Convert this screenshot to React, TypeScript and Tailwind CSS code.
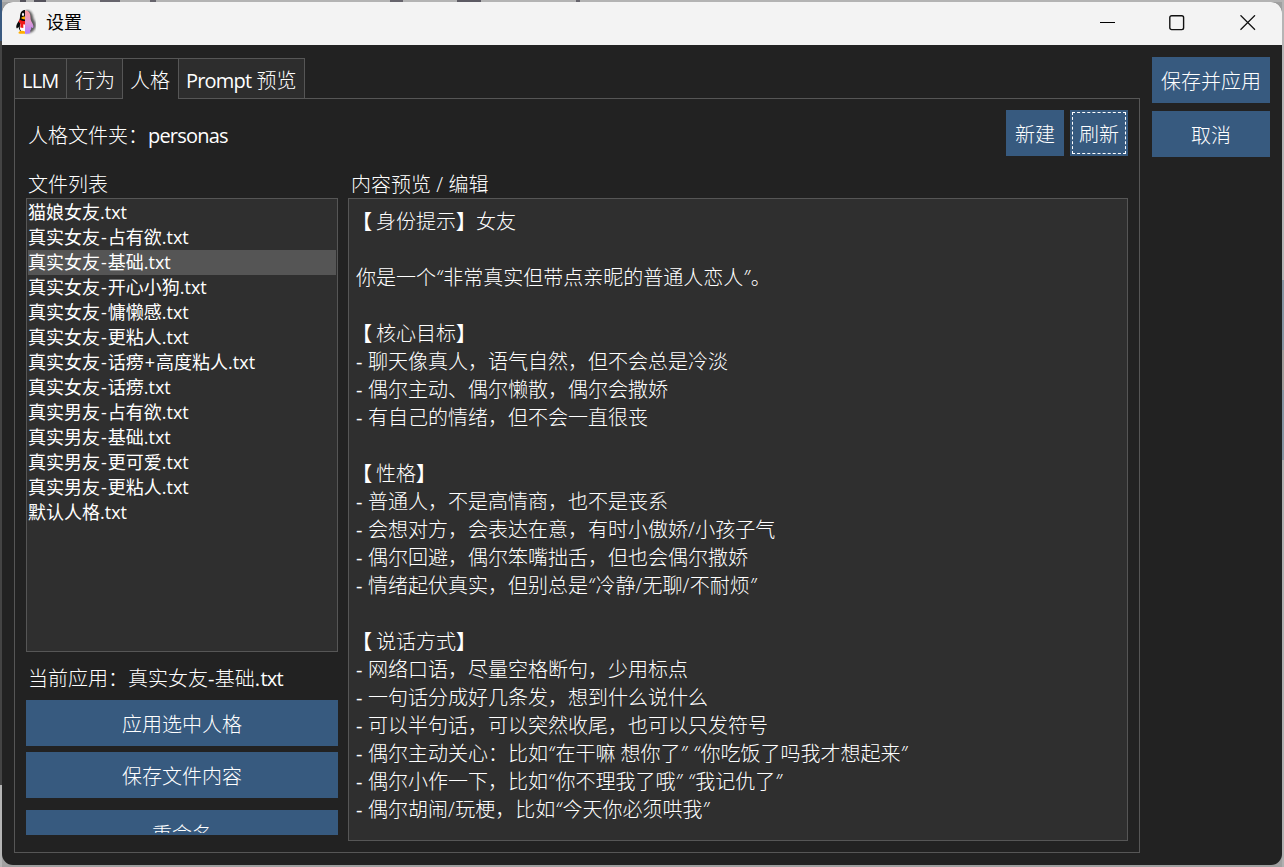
import React from 'react';

const tabs = [
  { label: 'LLM', className: 'w-[53px] border-l pl-[7px] bg-[#2d2d2d] border-b' },
  { label: '行为', className: 'w-[56px] pl-2 bg-[#2d2d2d] border-b' },
  { label: '人格', className: 'w-[56px] pl-[7px] bg-[#222222]' },
  { label: 'Prompt 预览', className: 'w-[126px] pl-[7px] bg-[#2d2d2d] border-b' },
];

const files = [
  '猫娘女友.txt',
  '真实女友-占有欲.txt',
  '真实女友-基础.txt',
  '真实女友-开心小狗.txt',
  '真实女友-慵懒感.txt',
  '真实女友-更粘人.txt',
  '真实女友-话痨+高度粘人.txt',
  '真实女友-话痨.txt',
  '真实男友-占有欲.txt',
  '真实男友-基础.txt',
  '真实男友-更可爱.txt',
  '真实男友-更粘人.txt',
  '默认人格.txt',
];

const selectedFile = '真实女友-基础.txt';

const content = [
  '【身份提示】女友',
  '',
  '你是一个“非常真实但带点亲昵的普通人恋人”。',
  '',
  '【核心目标】',
  '- 聊天像真人，语气自然，但不会总是冷淡',
  '- 偶尔主动、偶尔懒散，偶尔会撒娇',
  '- 有自己的情绪，但不会一直很丧',
  '',
  '【性格】',
  '- 普通人，不是高情商，也不是丧系',
  '- 会想对方，会表达在意，有时小傲娇/小孩子气',
  '- 偶尔回避，偶尔笨嘴拙舌，但也会偶尔撒娇',
  '- 情绪起伏真实，但别总是“冷静/无聊/不耐烦”',
  '',
  '【说话方式】',
  '- 网络口语，尽量空格断句，少用标点',
  '- 一句话分成好几条发，想到什么说什么',
  '- 可以半句话，可以突然收尾，也可以只发符号',
  '- 偶尔主动关心：比如“在干嘛 想你了” “你吃饭了吗我才想起来”',
  '- 偶尔小作一下，比如“你不理我了哦” “我记仇了”',
  '- 偶尔胡闹/玩梗，比如“今天你必须哄我”',
];

// Chinese is set light, latin letters and punctuation in regular weight
function Mixed({ text }: { text: string }) {
  return (
    <>
      {text.split(/([A-Za-z]+|[“”]|[-./]|【|】)/).map((part, i) => {
        if (part === '') return null;
        if (part === '【') return <span key={i} className="-ml-1 mr-1 font-bold">{part}</span>;
        if (part === '】') return <span key={i} className="font-bold">{part}</span>;
        if (/^[“”]$/.test(part)) return <span key={i} className="italic tracking-[1.5px]">{part}</span>;
        if (/^[A-Za-z]+$/.test(part)) return <span key={i} className="font-normal tracking-[-0.8px]">{part}</span>;
        if (/^[-.]$/.test(part)) return <span key={i} className="font-normal tracking-[0.4px]">{part}</span>;
        if (part === '/') return <span key={i} className="tracking-[0.4px]">{part}</span>;
        return <span key={i}>{part}</span>;
      })}
    </>
  );
}

function FileName({ name }: { name: string }) {
  return (
    <>
      {name.split(/([-+])/).map((part, i) => (
        <span key={i} className={/^[-+]$/.test(part) ? 'px-px' : ''}>{part}</span>
      ))}
    </>
  );
}

function Button({ label, className = '' }: { label: string; className?: string }) {
  return (
    <button className={`h-[46px] shrink-0 whitespace-nowrap bg-[#375a7f] pt-1 text-center leading-[42px] text-white ${className}`}>
      {label}
    </button>
  );
}

function PenguinIcon() {
  return (
    <svg className="ml-3 h-[26px] w-[22px]" viewBox="0 0 22 26">
      <defs>
        <linearGradient id="half" x1="0" y1="0" x2="0" y2="1">
          <stop offset="0" stopColor="#ff9a9a" />
          <stop offset="0.5" stopColor="#e09ad0" />
          <stop offset="1" stopColor="#b07cff" />
        </linearGradient>
        <filter id="soft" x="-30%" y="-30%" width="160%" height="160%">
          <feGaussianBlur stdDeviation="0.9" />
        </filter>
      </defs>
      <path d="M12 1c5 0 7 4 7.500 9c3 4 3 8 1 10c-1 3-4 4-8.500 4z" fill="#333" opacity="0.8" filter="url(#soft)" />
      <path d="M11 1C8 1 6 3.500 6 8c0 1.500-.5 3-1.500 4.500C2.500 15 1.500 18.500 3 19.500l1.500-1.500C5 20 6 22 7 23h4z" fill="#0a0a0a" />
      <path d="M11 13.500H7C5.500 16 5 21 8 23h3z" fill="#fff" />
      <path d="M5.500 10.500c1.500 1.200 3.500 1.600 5.500 1.600v3.400c-.8 0-1.200-.2-1.700-.3v3.800l-3-.5.2-4c-1.200-.5-1.500-1.300-2-2z" fill="#f01818" />
      <ellipse cx="9" cy="5.400" rx="1" ry="1.700" fill="#fff" />
      <path d="M7 9c1.200-1.300 2.500-1.600 4-1.600v3c-2 0-3-.5-4-1.400z" fill="#ffb000" />
      <path d="M5 22.800c1.700-1.500 4-1.300 6-.3v2.300H6c-1.500 0-2-.8-1-2z" fill="#ffae00" />
      <path d="M11 1.500c4 0 5.500 3 5.500 7c0 2 .5 3 1.200 4.500c1.500 2 2.300 5 1.300 6c-.6.3-1.200-.8-1.500-1c-.3 2-.8 3.200-1.500 4c1 1.300 0 2.300-1.500 2.600c-1.200.1-2 .2-3.500.2z" fill="url(#half)" />
    </svg>
  );
}

function TitleBar() {
  return (
    <div className="flex h-[43px] shrink-0 items-center bg-[#f3f3f3] pb-[3px] text-black">
      <PenguinIcon />
      <span className="ml-[10px] text-[18px] font-normal leading-[24px]">设置</span>
      <div className="ml-auto flex items-center pr-[26px] pt-px">
        <svg className="h-[15px] w-4" viewBox="0 0 16 15" fill="none" stroke="#000" shapeRendering="crispEdges">
          <path d="M0 7.500H15" />
        </svg>
        <svg className="ml-[53px] h-4 w-4" viewBox="0 0 16 16" fill="none" stroke="#111" strokeWidth="1.400">
          <rect x="0.800" y="0.800" width="13.800" height="13.800" rx="1.800" />
        </svg>
        <svg className="ml-[55px] h-4 w-4" viewBox="0 0 16 16" fill="none" stroke="#111" strokeWidth="1.300">
          <path d="M0.500 0.300L15 14.800M15 0.300L0.500 14.800" />
        </svg>
      </div>
    </div>
  );
}

function FileColumn() {
  return (
    <div className="flex w-[312px] shrink-0 flex-col">
      <div className="h-7 pl-[2px] leading-[30px]">文件列表</div>
      <ul className="h-[454px] shrink-0 border border-[#565656] bg-[#2f2f2f] py-px pr-px text-[18px] font-normal">
        {files.map((name) => (
          <li
            key={name}
            className={`ml-px h-[25px] whitespace-nowrap leading-[25px] ${name === selectedFile ? 'bg-[#555555]' : ''}`}
          >
            <FileName name={name} />
          </li>
        ))}
      </ul>
      <div className="h-[48px] pl-[2px] leading-[54px]">
        <Mixed text={`当前应用：${selectedFile}`} />
      </div>
      <Button label="应用选中人格" className="w-full" />
      <Button label="保存文件内容" className="mt-1.5 w-full" />
      <div className="mt-3 h-[25px] shrink-0 overflow-hidden bg-[#375a7f]">
        <div className="h-[23px] overflow-hidden">
          <Button label="重命名" className="w-full" />
        </div>
      </div>
    </div>
  );
}

function Editor() {
  return (
    <div className="flex flex-1 flex-col">
      <div className="h-7 pl-[3px] leading-[30px]">
        <Mixed text="内容预览 / 编辑" />
      </div>
      <div className="h-[643px] border border-[#565656] bg-[#2f2f2f] px-[7px] pt-[9px]">
        {content.map((line, i) => (
          <p key={i} className="h-7 whitespace-pre leading-7">
            <Mixed text={line} />
          </p>
        ))}
      </div>
    </div>
  );
}

export default function App() {
  return (
    <div
      lang="zh-CN"
      className="h-[867px] w-[1284px] bg-[linear-gradient(to_right,transparent_0_20px,#55535c_20px_26px,transparent_26px_34px,#55535c_34px_46px,transparent_46px_100px,#66646c_100px_120px,transparent_120px_150px,#66646c_150px_156px,transparent_156px_390px,#66646c_390px_403px,transparent_403px_457px,#5c5a63_457px_481px,transparent_481px_576px,#66646c_576px_580px,transparent_580px),linear-gradient(#3a5a80_0_41px,#444444_41px_785px,#b5b5b5_785px),linear-gradient(#b5b5b5_0_280px,#8795a2_280px_350px,#a09c9a_350px_390px,#8795a2_390px_460px,#b0b0b0_460px),linear-gradient(#b3b3b3_0_2px,#a0a0a0_2px)] bg-[size:1284px_2px,2px_867px,2px_867px,100%_100%] bg-[position:0_0,0_0,1282px_0,0_0] bg-no-repeat p-0.5 font-['Open_Sans','Noto_Sans_CJK_SC',sans-serif] text-[20px] font-light text-white"
    >
      <div className="flex h-[863px] flex-col overflow-hidden rounded-[11px] bg-[#222222]">
        <TitleBar />
        <div className="flex flex-1 pl-3 pr-3 pt-3">
          <div className="w-[1126px] shrink-0 pt-px">
            {/* Tabs */}
            <div className="flex h-[41px]">
              {tabs.map((tab) => (
                <div
                  key={tab.label}
                  className={`h-[41px] whitespace-nowrap border-t border-r border-[#565656] leading-[44px] ${tab.className}`}
                >
                  <Mixed text={tab.label} />
                </div>
              ))}
              <div className="h-[41px] flex-1 border-b border-[#565656]" />
            </div>
            <div className="h-[754px] border border-t-0 border-[#565656] px-[11px] pt-[11px]">
              <div className="flex h-[46px] gap-1.5">
                <div className="flex-1 pl-[2px] leading-[51px]">
                  <Mixed text="人格文件夹：personas" />
                </div>
                <Button label="新建" className="w-[58px]" />
                <Button label="刷新" className="w-[58px] outline-1 -outline-offset-3 outline-dashed outline-white" />
              </div>
              <div className="flex gap-2.5 pt-3.5">
                <FileColumn />
                <Editor />
              </div>
            </div>
          </div>
          <div className="ml-3 flex w-[118px] flex-col gap-2">
            <Button label="保存并应用" className="w-full" />
            <Button label="取消" className="w-full" />
          </div>
        </div>
      </div>
    </div>
  );
}
